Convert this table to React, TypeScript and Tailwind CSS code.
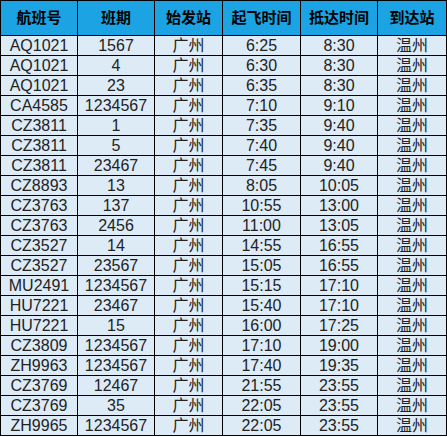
const rows: [string, string, string, string, string, string][] = [
  ['AQ1021', '1567', '广州', '6:25', '8:30', '温州'],
  ['AQ1021', '4', '广州', '6:30', '8:30', '温州'],
  ['AQ1021', '23', '广州', '6:35', '8:30', '温州'],
  ['CA4585', '1234567', '广州', '7:10', '9:10', '温州'],
  ['CZ3811', '1', '广州', '7:35', '9:40', '温州'],
  ['CZ3811', '5', '广州', '7:40', '9:40', '温州'],
  ['CZ3811', '23467', '广州', '7:45', '9:40', '温州'],
  ['CZ8893', '13', '广州', '8:05', '10:05', '温州'],
  ['CZ3763', '137', '广州', '10:55', '13:00', '温州'],
  ['CZ3763', '2456', '广州', '11:00', '13:05', '温州'],
  ['CZ3527', '14', '广州', '14:55', '16:55', '温州'],
  ['CZ3527', '23567', '广州', '15:05', '16:55', '温州'],
  ['MU2491', '1234567', '广州', '15:15', '17:10', '温州'],
  ['HU7221', '23467', '广州', '15:40', '17:10', '温州'],
  ['HU7221', '15', '广州', '16:00', '17:25', '温州'],
  ['CZ3809', '1234567', '广州', '17:10', '19:00', '温州'],
  ['ZH9963', '1234567', '广州', '17:40', '19:35', '温州'],
  ['CZ3769', '12467', '广州', '21:55', '23:55', '温州'],
  ['CZ3769', '35', '广州', '22:05', '23:55', '温州'],
  ['ZH9965', '1234567', '广州', '22:05', '23:55', '温州'],
]

const headers = ['航班号', '班期', '始发站', '起飞时间', '抵达时间', '到达站']

export default function App() {
  return (
    <div className="w-[447px] h-[437px] bg-white overflow-hidden">
      <table className="w-[447px] border-collapse table-fixed text-center text-[#111] font-['Liberation_Sans','Noto_Sans_CJK_SC',sans-serif]">
        <colgroup>
          <col className="w-[77px]" />
          <col className="w-[77px]" />
          <col className="w-[68px]" />
          <col className="w-[78px]" />
          <col className="w-[77px]" />
          <col className="w-[69px]" />
        </colgroup>
        <thead>
          <tr className="h-[35px] bg-[#1ba3e3] text-black">
            {headers.map(h => (
              <th key={h} className="border border-black p-0 text-[15px] font-bold text-black">
                {h}
              </th>
            ))}
          </tr>
        </thead>
        <tbody>
          {rows.map((r, ri) => (
            <tr key={ri} className="h-[20px] bg-[#ddebf7]">
              {r.map((c, ci) => (
                <td key={ci} className="border border-black p-0 leading-[19px] text-[16px] text-[#222]">
                  {c}
                </td>
              ))}
            </tr>
          ))}
        </tbody>
      </table>
    </div>
  )
}
